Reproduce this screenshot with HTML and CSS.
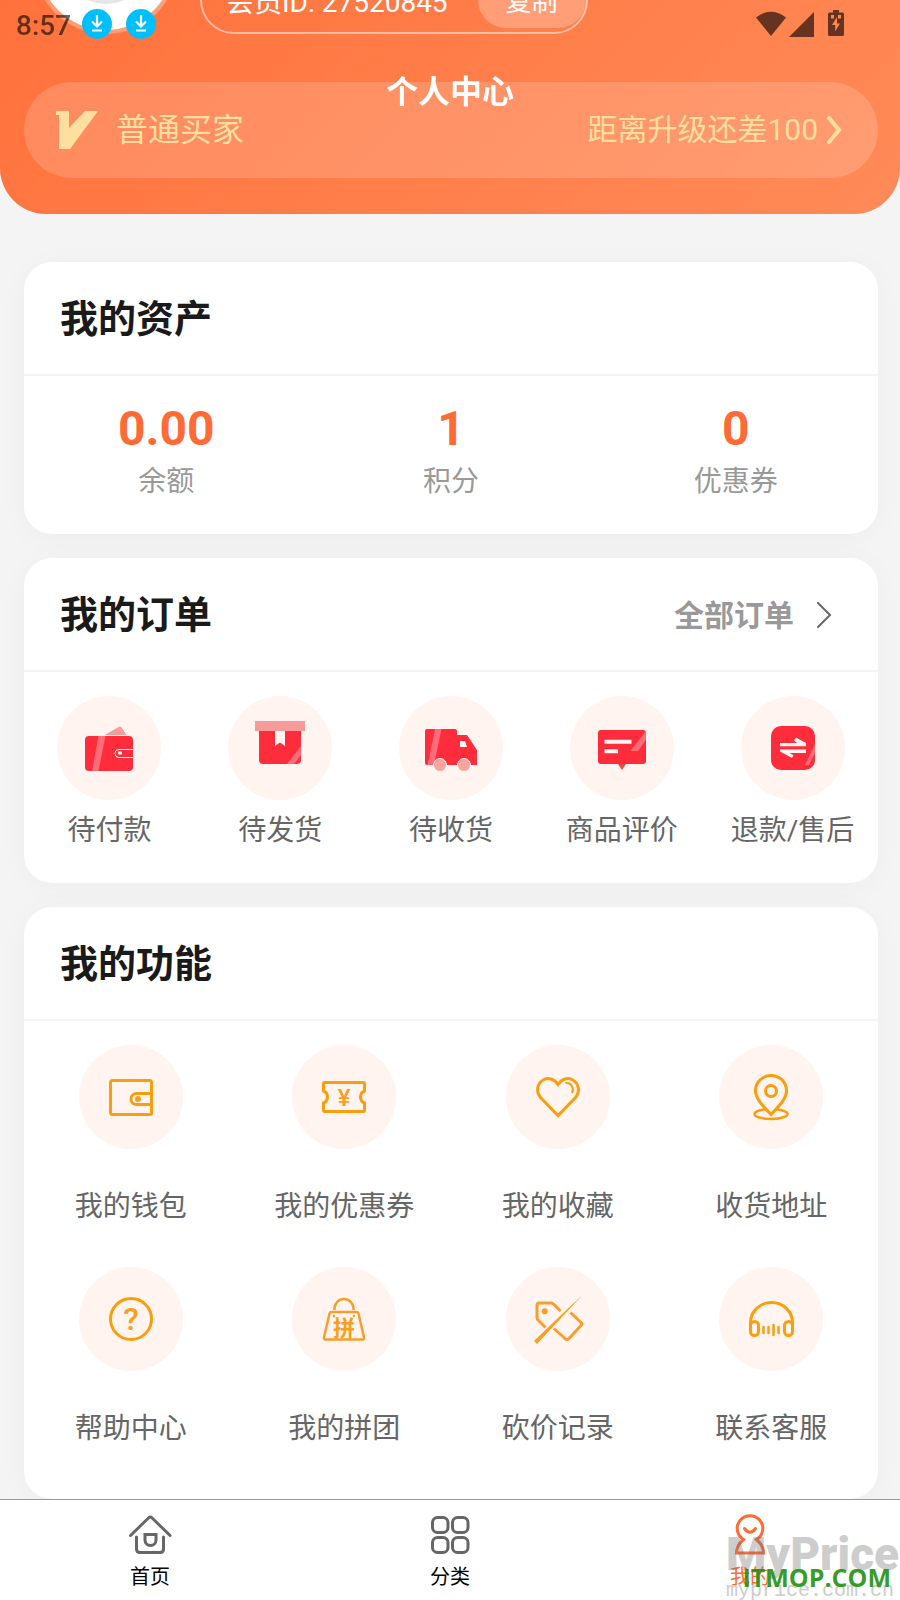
FILE: index.html
```
<!DOCTYPE html>
<html lang="zh-CN">

<head>
  <meta charset="UTF-8">
  <meta name="viewport" content="width=device-width, initial-scale=1.0">
  <title>个人中心</title>
  <link rel="stylesheet" href="styles.css">
</head>

<body>
  <!-- Status bar -->
  <div class="status-bar">
    <span class="status-time">8:57</span>
    <svg class="status-dot" viewBox="0 0 30 30">
      <circle cx="15" cy="15" r="15" fill="#00bfff" />
      <path d="M15 6v11M10 12.500l5 5 5-5M10 21.500h10" fill="none" stroke="#fff" stroke-width="2.200" />
    </svg>
    <svg class="status-dot" viewBox="0 0 30 30">
      <circle cx="15" cy="15" r="15" fill="#00bfff" />
      <path d="M15 6v11M10 12.500l5 5 5-5M10 21.500h10" fill="none" stroke="#fff" stroke-width="2.200" />
    </svg>
    <svg class="status-signals" viewBox="0 0 88 28" fill="#653320">
      <path d="M0 7.500Q15-4 30 7.500L15 26z" />
      <path d="M58 2v25H33z" />
      <path fill-rule="evenodd" d="M77 0h6v2.500h3.500q1.500 0 1.500 1.500v20.500q0 1.500-1.500 1.500h-13q-1.500 0-1.500-1.500V4q0-1.500 1.500-1.500H77zM75 5v3.500h3V5zM82 5v3.500h3V5zM81 7l-5 8h3.200v6.500l4.800-8h-3z" />
    </svg>
  </div>

  <h1 class="page-title">个人中心</h1>

  <header class="header">
    <div class="user">
      <div class="avatar"><span class="avatar-image"></span></div>
      <div class="user-id">
        <span>会员ID: 27520845</span>
        <button type="button" class="copy-button">复制</button>
      </div>
    </div>
    <a href="#" class="member">
      <svg class="member-badge" viewBox="0 0 42 38">
        <path d="M0 0h13v17L29 0h13L14 38H3V4H0z" fill="#ffdfa0" />
      </svg>
      <span class="member-level">普通买家</span>
      <span class="member-upgrade">距离升级还差100</span>
      <svg class="member-arrow" viewBox="0 0 16 28">
        <path d="M3 2l10 12L3 26" fill="none" stroke="#ffdfa0" stroke-width="4" stroke-linecap="round" />
      </svg>
    </a>
  </header>

  <main class="content">
    <section class="card">
      <div class="card-header">
        <h2>我的资产</h2>
      </div>
      <div class="assets">
        <a href="#" class="asset"><b>0.00</b><span>余额</span></a>
        <a href="#" class="asset"><b>1</b><span>积分</span></a>
        <a href="#" class="asset"><b>0</b><span>优惠券</span></a>
      </div>
    </section>

    <section class="card">
      <div class="card-header">
        <h2>我的订单</h2>
        <a href="#" class="all-orders">
          全部订单
          <svg viewBox="0 0 16 28">
            <path d="M2 1l12 12L2 25" fill="none" stroke="#666" stroke-width="2" stroke-linecap="round" />
          </svg>
        </a>
      </div>
      <div class="orders">
        <a href="#" class="item">
          <svg class="icon" viewBox="0 0 104 104">
            <path d="M48 39l13.500-8q2-1 3 .500l5 7.500z" fill="#f59c9a" />
            <rect x="28" y="40" width="48" height="35" rx="4" fill="#ff2d3c" />
            <path d="M41.500 40h7l-7 35H35z" fill="#ff6b76" />
            <path d="M76 53.500H62a4 4 0 0 0 0 8h14" fill="none" stroke="#fff4f0" />
            <rect x="61" y="55.500" width="4" height="3" rx="1" fill="#fff4f0" />
          </svg>
          <span>待付款</span>
        </a>
        <a href="#" class="item">
          <svg class="icon" viewBox="0 0 104 104">
            <path d="M31 35h42v29q0 4-4 4H35q-4 0-4-4z" fill="#ff2d3c" />
            <path d="M73 50v9l-7 9h-7z" fill="#ff6b76" />
            <path d="M47 35h10v15l-5-3.500-5 3.500z" fill="#fff4f0" />
            <path d="M27 25h50v10H27z" fill="#f59c9a" />
          </svg>
          <span>待发货</span>
        </a>
        <a href="#" class="item">
          <svg class="icon" viewBox="0 0 104 104">
            <path d="M28 33h28q2 0 2 2v4h10l10 15v15H28q-2 0-2-2V35q0-2 2-2z" fill="#ff2d3c" />
            <path d="M61 45h5l2 6h-7z" fill="#fff4f0" />
            <path d="M36 33h6.500L35 69h-6.500z" fill="#ff6b76" />
            <circle cx="41" cy="69" r="6.500" fill="#f8a39e" stroke="#fff4f0" />
            <circle cx="65" cy="69" r="6.500" fill="#f8a39e" stroke="#fff4f0" />
          </svg>
          <span>待收货</span>
        </a>
        <a href="#" class="item">
          <svg class="icon" viewBox="0 0 104 104">
            <rect x="28" y="34" width="48" height="34" rx="3" fill="#ff2d3c" />
            <path d="M48 68h8l-4 6z" fill="#ee4a48" />
            <path d="M76 35v8.500L68 55h-7.500z" fill="#ff6b76" />
            <path d="M34.500 45.800h27M34.500 55.200h13.500" stroke="#fff4f0" stroke-width="4" />
          </svg>
          <span>商品评价</span>
        </a>
        <a href="#" class="item">
          <svg class="icon" viewBox="0 0 104 104">
            <rect x="30" y="30" width="44" height="44" rx="10" fill="#ff2d3c" />
            <path d="M74 48v9l-6 12h-4z" fill="#ff6b76" />
            <path d="M39 47h17l-3-2.500 2-3 10 5.500v3.300H39zM65 57H48.500l4 2.200-1.500 2.800-12-6.500V53.500h26z" fill="#fff4f0" />
          </svg>
          <span>退款/售后</span>
        </a>
      </div>
    </section>

    <section class="card">
      <div class="card-header">
        <h2>我的功能</h2>
      </div>
      <div class="functions">
        <a href="#" class="item">
          <svg class="icon line" viewBox="0 0 104 104">
            <rect x="31.500" y="35.500" width="41" height="34" rx="2" />
            <path d="M72.500 48.500H57.500a5.500 5.500 0 0 0 0 11h15" />
            <circle class="solid" cx="59" cy="54" r="3" />
          </svg>
          <span>我的钱包</span>
        </a>
        <a href="#" class="item">
          <svg class="icon line" viewBox="0 0 104 104">
            <path d="M31.500 46v-7q0-1.500 1.500-1.500h38q1.500 0 1.500 1.500v7a6.500 6.500 0 0 0 0 12v7q0 1.500-1.500 1.500H33q-1.500 0-1.500-1.500v-7a6.500 6.500 0 0 0 0-12z" />
            <text class="yuan" x="52" y="61">¥</text>
          </svg>
          <span>我的优惠券</span>
        </a>
        <a href="#" class="item">
          <svg class="icon line" viewBox="0 0 104 104">
            <path d="M52 39.500C48 33.500 42 32.500 38 34.500c-7 3.500-8.500 12-3.500 18L52 70.500l17.500-18c5-6 3.500-14.500-3.500-18-4-2-10-1-14 5z" />
            <path d="M59.500 38c6-.500 9 5 6.500 10" stroke-width="2" />
          </svg>
          <span>我的收藏</span>
        </a>
        <a href="#" class="item">
          <svg class="icon line" viewBox="0 0 104 104">
            <ellipse cx="52" cy="69" rx="16.500" ry="5" stroke-width="2.500" />
            <path class="pin" d="M52 69.500C44 61 36.500 54 36.500 45.500a15.500 15 0 0 1 31 0C67.500 54 60 61 52 69.500z" />
            <circle cx="52" cy="46" r="5.500" />
          </svg>
          <span>收货地址</span>
        </a>
        <a href="#" class="item">
          <svg class="icon line" viewBox="0 0 104 104">
            <circle cx="52" cy="52" r="20.500" />
            <text class="question" x="52" y="63">?</text>
          </svg>
          <span>帮助中心</span>
        </a>
        <a href="#" class="item">
          <svg class="icon line bag" viewBox="0 0 104 104">
            <path d="M39.500 45h25q1.500 0 2 1.500l5.500 24q.500 2-1.500 2H33.500q-2 0-1.500-2l5.500-24q.500-1.500 2-1.500z" stroke-width="2.500" />
            <path d="M42.500 43v-1.500a9.500 9.500 0 0 1 19 0V43" stroke-width="2.500" />
            <circle class="solid" cx="42" cy="49" r="1.200" />
            <circle class="solid" cx="62" cy="49" r="1.200" />
            <text class="pin-text" x="52" y="69">拼</text>
          </svg>
          <span>我的拼团</span>
        </a>
        <a href="#" class="item">
          <svg class="icon line bag" viewBox="0 0 104 104">
            <path d="M54.500 44L48 37.500Q46.500 36 45 36H33.500Q31 36 31 38.500V51q0 1 1 2l7.500 7.500M64.500 45.500L75 55.500q1.500 1.500 0 3L63 71.500q-2 2-4 0l-11-10" />
            <circle class="solid" cx="38.700" cy="44.300" r="3" />
            <path class="solid" d="M77 27.500L54 49 28 74l3 3 25-27z" />
          </svg>
          <span>砍价记录</span>
        </a>
        <a href="#" class="item">
          <svg class="icon line" viewBox="0 0 104 104">
            <path d="M31.500 60v-4.500a21 20 0 0 1 42 0V60" />
            <rect x="31.500" y="54.500" width="8" height="14" rx="4" />
            <rect x="65.500" y="54.500" width="8" height="14" rx="4" />
            <path d="M44.500 60v6M49.500 60v6M54.500 58v10M59.500 60v6" stroke-width="2.500" stroke-linecap="round" />
          </svg>
          <span>联系客服</span>
        </a>
      </div>
    </section>
  </main>

  <!-- Bottom tabs -->
  <nav class="tabs">
    <a href="#" class="tab">
      <svg viewBox="0 0 48 48">
        <path d="M4.500 25.500L22.500 8q1.800-1.800 3.600 0l18 17.500M10.500 27v12q0 3.500 3.500 3.500h20q3.500 0 3.500-3.500V27M19 24.500h11V30a5.500 5.500 0 0 1-11 0z" />
      </svg>
      <span>首页</span>
    </a>
    <a href="#" class="tab">
      <svg viewBox="0 0 48 48">
        <rect x="6.500" y="7.500" width="15.500" height="15" rx="5" />
        <rect x="26.500" y="7.500" width="15.500" height="15" rx="5" />
        <rect x="6.500" y="27.500" width="15.500" height="15" rx="5" />
        <rect x="26.500" y="27.500" width="15.500" height="15" rx="5" />
      </svg>
      <span>分类</span>
    </a>
    <a href="#" class="tab active">
      <svg viewBox="0 0 48 48">
        <path d="M17.500 29.500a12.800 12.800 0 1 1 13 0q7 6 7 13.500h-27q0-7.500 7-13.500zM18.500 18.500q5.500 7.500 11 0" />
      </svg>
      <span>我的</span>
    </a>
    <div class="watermark">
      <span class="watermark-name">MyPrice</span>
      <span class="watermark-url">myprice.com.cn</span>
      <span class="watermark-site">ITMOP.COM</span>
    </div>
  </nav>
</body>

</html>
```

FILE: styles.css
```
* {
  box-sizing: border-box;
}

body {
  margin: 0;
  padding-bottom: 100px;
  background-color: #f4f4f4;
  color: #666;
  font-family: Roboto, "Noto Sans CJK SC", sans-serif;
  font-size: 28px;
  line-height: 40px;
}

a {
  color: inherit;
  text-decoration: none;
}

svg {
  display: block;
  flex-shrink: 0;
}

/* Status bar and title stay over the scrolled page */
.status-bar {
  position: fixed;
  z-index: 3;
  top: 0;
  left: 0;
  right: 0;
  height: 48px;
  padding: 0 56px 0 16px;
  display: flex;
  align-items: center;
  gap: 14px;
}

.status-time {
  margin-right: -3px;
  padding-top: 4px;
  color: rgba(0, 0, 0, 0.6);
  font-weight: 500;
}

.status-dot {
  width: 30px;
  height: 30px;
}

.status-signals {
  width: 88px;
  height: 28px;
  margin-left: auto;
}

.page-title {
  position: fixed;
  z-index: 2;
  top: 48px;
  left: 0;
  right: 0;
  margin: 0;
  color: #fff;
  font-size: 32px;
  line-height: 88px;
  text-align: center;
  pointer-events: none;
}

/* Header */
.header {
  padding: 0 22px 36px 24px;
  border-radius: 0 0 46px 46px;
  background: linear-gradient(135deg, #ff713c, #ff8b58);
  overflow: hidden;
}

.user {
  display: flex;
  align-items: flex-end;
  gap: 22px;
  margin: -110px 0 48px;
  padding-left: 10px;
}

.avatar {
  width: 144px;
  height: 144px;
  padding: 24px;
  border: 4px solid rgba(255, 255, 255, 0.3);
  border-radius: 50%;
  background: #fff padding-box;
}

.avatar-image {
  display: block;
  height: 86px;
  border-radius: 50%;
  background-color: #e5e5e5;
}

.user-id {
  display: flex;
  align-items: center;
  gap: 30px;
  height: 68px;
  padding-left: 24px;
  border: 2px solid rgba(255, 255, 255, 0.5);
  border-radius: 34px;
  color: #fff;
}

.user-id span {
  padding-top: 6px;
}

.copy-button {
  width: 108px;
  height: 56px;
  padding: 4px 0 0;
  border: none;
  border-radius: 28px;
  background-color: rgba(255, 255, 255, 0.25);
  color: #fff;
  font: inherit;
  font-size: 26px;
  cursor: pointer;
}

.member {
  display: flex;
  align-items: center;
  height: 96px;
  padding: 0 36px 0 32px;
  border-radius: 48px;
  background-color: rgba(255, 255, 255, 0.16);
  color: #ffdfa0;
}

.member-badge {
  width: 42px;
  height: 38px;
}

.member-level {
  margin-left: 18px;
  font-size: 32px;
}

.member-upgrade {
  margin-left: auto;
  margin-right: 8px;
  font-size: 30px;
}

.member-arrow {
  width: 16px;
  height: 28px;
}

/* Cards */
.content {
  display: flex;
  flex-direction: column;
  gap: 24px;
  padding: 48px 22px 0 24px;
}

.card {
  border-radius: 28px;
  background-color: #fff;
  box-shadow: 0 4px 32px rgba(0, 0, 0, 0.03);
}

.card-header {
  display: flex;
  align-items: center;
  justify-content: space-between;
  height: 114px;
  padding: 2px 46px 0 36px;
  border-bottom: 2px solid #f4f4f4;
}

.card-header h2 {
  margin: 0;
  color: #1a1a1a;
  font-size: 38px;
}

.all-orders {
  display: flex;
  align-items: center;
  gap: 22px;
  padding-top: 2px;
  color: #999;
  font-size: 30px;
  font-weight: bold;
}

.all-orders svg {
  width: 16px;
  height: 28px;
}

.assets {
  display: grid;
  grid-template-columns: repeat(3, 1fr);
  padding: 25px 0 32px;
}

.asset {
  display: flex;
  flex-direction: column;
  align-items: center;
  gap: 5px;
  color: #999;
}

.asset b {
  color: #ff6b35;
  font-size: 48px;
  line-height: 56px;
}

.orders,
.functions {
  display: grid;
}

.orders {
  grid-template-columns: repeat(5, 1fr);
  padding: 24px 0 32px;
}

.functions {
  grid-template-columns: repeat(4, 1fr);
  row-gap: 40px;
  padding: 24px 0 50px;
}

.item {
  display: flex;
  flex-direction: column;
  align-items: center;
  gap: 11px;
  white-space: nowrap;
}

.functions .item {
  gap: 38px;
}

.icon {
  width: 104px;
  height: 104px;
  border-radius: 50%;
  background-color: #fff4f0;
}

.line {
  fill: none;
  stroke: #fa9e0d;
  stroke-width: 3;
}

.bag {
  stroke: #fb9d2d;
}

.line .solid {
  fill: #fb9d1d;
  stroke: none;
}

.line .pin {
  fill: #fff4f0;
}

.line text {
  fill: #fa9e1d;
  stroke: none;
  text-anchor: middle;
}

.yuan {
  font-size: 24px;
  font-weight: 500;
}

.question {
  font-size: 32px;
  font-weight: 500;
}

.pin-text {
  font-size: 22px;
  font-weight: bold;
}

/* Bottom tabs */
.tabs {
  position: fixed;
  left: 0;
  right: 0;
  bottom: 0;
  display: grid;
  grid-template-columns: repeat(3, 1fr);
  height: 101px;
  padding-top: 10px;
  border-top: 1px solid #999;
  background-color: #fff;
}

.tab {
  display: flex;
  flex-direction: column;
  align-items: center;
  gap: 7px;
  color: #000;
  font-size: 20px;
  line-height: 24px;
}

.tab svg {
  width: 48px;
  height: 48px;
  fill: none;
  stroke: #666;
  stroke-width: 3;
  stroke-linecap: round;
}

.tab.active {
  color: #ff6b35;
}

.tab.active svg {
  stroke: #ff6b35;
}

.watermark {
  position: absolute;
  right: 0;
  bottom: 0;
  width: 174px;
  height: 76px;
  overflow: hidden;
  white-space: nowrap;
  pointer-events: none;
}

.watermark span {
  position: absolute;
}

.watermark-name {
  left: 0;
  top: 0;
  color: rgba(110, 110, 110, 0.35);
  font-size: 46px;
  font-weight: 900;
  line-height: 60px;
}

.watermark-url {
  left: 0;
  bottom: 0;
  color: #ccc;
  font-family: "Liberation Mono", monospace;
  font-size: 20px;
  line-height: 18px;
}

.watermark-site {
  right: 9px;
  bottom: 9px;
  color: rgba(26, 145, 10, 0.9);
  font-family: "Open Sans", sans-serif;
  font-size: 25px;
  font-weight: bold;
  line-height: 28px;
}
```
